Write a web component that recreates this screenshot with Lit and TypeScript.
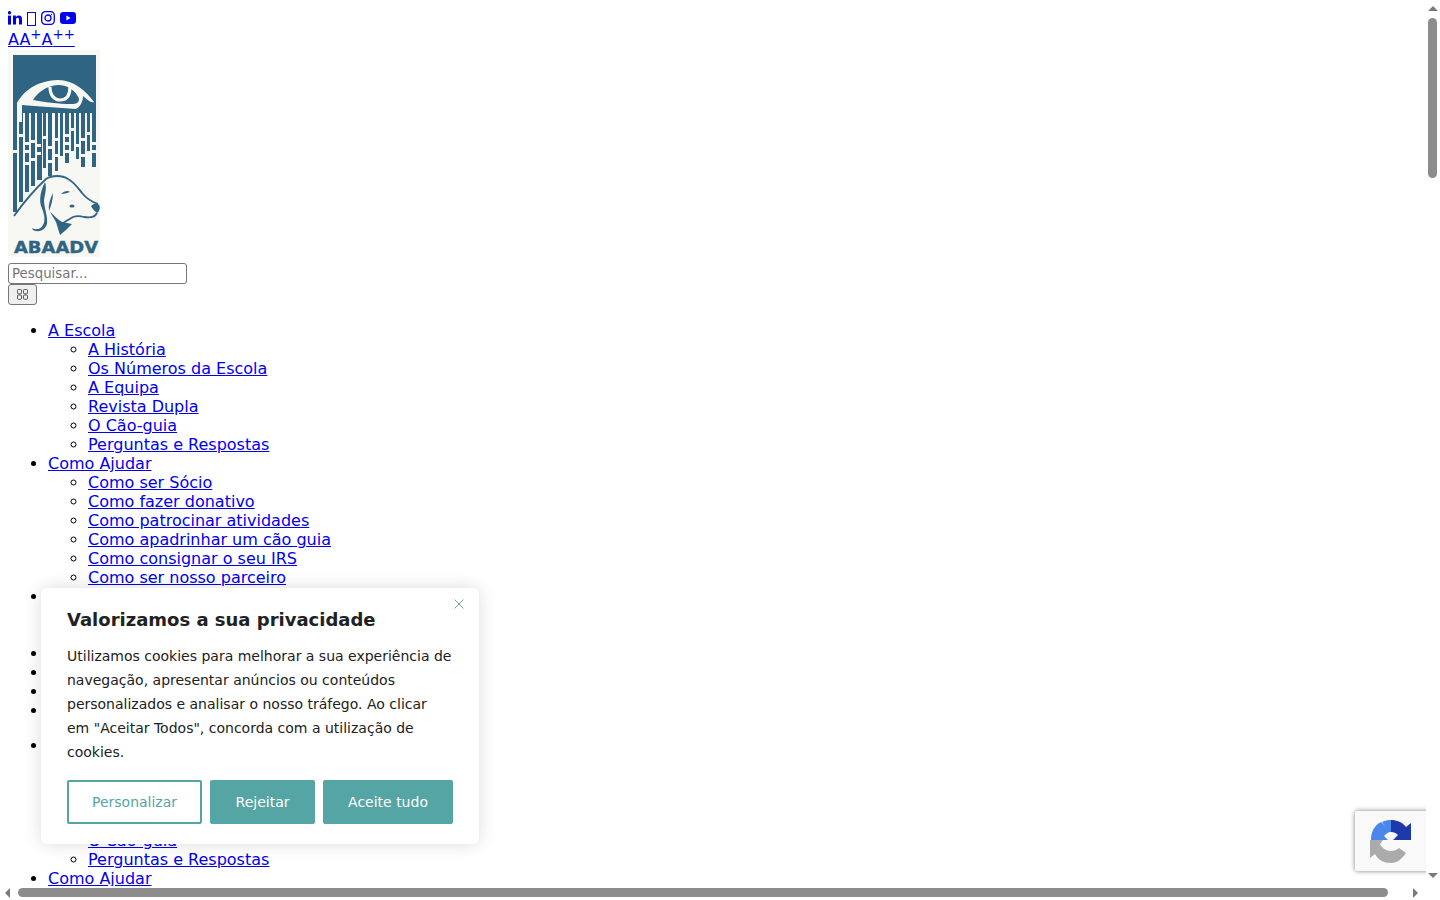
import { LitElement, html, css, svg } from "lit";
import { customElement } from "lit/decorators.js";

const sub = (items: string[]) => html`<ul>${items.map((t) => html`<li><a href="#">${t}</a></li>`)}</ul>`;

const escola = ["A História", "Os Números da Escola", "A Equipa", "Revista Dupla", "O Cão-guia", "Perguntas e Respostas"];
const ajudar = ["Como ser Sócio", "Como fazer donativo", "Como patrocinar atividades", "Como apadrinhar um cão guia", "Como consignar o seu IRS", "Como ser nosso parceiro"];

const BLUE = "#2f6583";
const PAPER = "#f7f7f4";

// x, width, bottom of each blue "rain" column of the logo
const rain: [number, number, number][] = [
  [5, 4, 162], [11, 4, 152], [17, 4, 142], [23, 4, 136], [29, 5, 130],
  [35, 3, 118], [40, 4, 126], [47, 3, 121], [52, 3, 106], [57, 4, 113],
  [63, 3, 101], [68, 3, 109], [73, 4, 117], [79, 3, 101], [84, 4, 117],
];
const dashes: [number, number][] = [
  [11, 84], [17, 92], [17, 100], [23, 90], [23, 108], [29, 94], [29, 102],
  [35, 86], [40, 96], [40, 110], [47, 88], [47, 104], [57, 84], [57, 92], [57, 100],
  [63, 78], [68, 94], [73, 88], [73, 104], [79, 82], [84, 92], [84, 100], [5, 100], [17, 112],
];

const logo = svg`
  <rect width="92" height="207" fill="${PAPER}"/>
  <rect x="5" y="5" width="83" height="58" fill="${BLUE}"/>
  ${rain.map(([x, w, b]) => svg`<rect x="${x}" y="58" width="${w}" height="${b - 58}" fill="${BLUE}"/>`)}
  ${dashes.map(([x, y]) => svg`<rect x="${x}" y="${y}" width="4" height="3" fill="${PAPER}"/>`)}
  <path d="M9 53 C15 42 27 31 50 30 C66 30 78 41 86 52 C83 53 80 50 75 46 C75 52 72 57 68 59 C50 58 30 56 14 55 L14 72 L9 72 Z" fill="${PAPER}"/>
  <path d="M25 50 C30 42 38 36 50 35 C60 35 68 41 71 49 C71 53 68 54 64 54 C50 54 36 52 25 50 Z" fill="${BLUE}"/>
  <path d="M42 37 C42 46 47 50 52 50 C58 50 62 46 62 37" fill="none" stroke="${PAPER}" stroke-width="3.200"/>
  <path d="M6 166 C16 152 26 140 38 129 C44 125 54 125 60 129 C66 132 70 138 74 143 C78 148 84 152 90 154"
    fill="none" stroke="${BLUE}" stroke-width="1.800"/>
  <path d="M90 154 C93 156 92 161 89 163 C86 161 84 158 83 156 C85 154 88 153 90 154 Z" fill="${BLUE}"/>
  <path d="M89 163 C87 167 82 168 76 167 C72 166 68 166 65 167 C60 170 56 172 54 174" fill="none" stroke="${BLUE}" stroke-width="1.800"/>
  <path d="M37 132 C33 140 31 148 33 156 C36 163 38 170 35 175 C32 180 28 180 24 178 L25 180 C31 183 37 180 39 174 C40 166 36 158 36 150 C37 144 39 138 37 132 Z" fill="${BLUE}"/>
  <path d="M45 143 C42 149 40 155 41 161 C43 156 45 150 45 143 Z" fill="${BLUE}"/>
  <path d="M42 162 L48 172 L52 185 C56 182 60 178 64 174 L54 172 C50 170 46 165 42 162 Z" fill="${BLUE}"/>
  <path d="M53 144 C56 141 60 140 62 142 C59 143 56 144 53 144 Z" fill="${BLUE}"/>
  <ellipse cx="64" cy="156" rx="2.500" ry="1.600" fill="${BLUE}"/>
  <text x="6" y="203" class="logo-text" textLength="84" lengthAdjust="spacingAndGlyphs">ABAADV</text>
`;

const recaptcha = svg`
  <path d="M22 1 V13 C19 13 17 15 15 17 L19 21 H2 C2 12 6 6 12 3 L16 7 L13 3 C16 1.500 19 1 22 1 Z" fill="#4a86ec"/>
  <path d="M22 1 C28 1 33 3 37 8 L42 4 V21 H24 L29 16 C27 14 25 13 22 13 Z" fill="#1c3aa9"/>
  <path d="M1 21 H14 L11 25 C13 29 17 32 22 32 C25 32 28 31 30 29 L37 34 C33 40 28 44 22 44 C15 44 9 41 6 35 L1 39 Z" fill="#ababab"/>
`;

@customElement("app-root")
export class AppRoot extends LitElement {
  static styles = css`
    :host {
      display: block;
      position: relative;
      width: 1440px;
      height: 900px;
      overflow: hidden;
      background: #fff;
      font-family: "DejaVu Sans", sans-serif;
      font-size: 16px;
      color: #000;
    }
    .page { box-sizing: border-box; width: 1426px; height: 886px; padding: 8px; overflow: hidden; }
    a { color: #0000ee; }
    .social { display: flex; align-items: center; height: 19px; gap: 5px; }
    .social a { display: flex; }
    .sz { display: block; line-height: 19px; }
    sup { line-height: normal; }
    .logo { display: block; width: 92px; height: 207px; margin-top: 1px; margin-bottom: 6px; }
    .logo-text { font: 700 16px "DejaVu Sans", sans-serif; fill: #2f6583; stroke: #2f6583; stroke-width: 0.4px; }
    input {
      display: block;
      box-sizing: border-box;
      width: 179px;
      height: 21px;
      padding: 1px 3px;
      border: 1px solid #767676;
      border-radius: 3px;
      font: 13.333px "DejaVu Sans", sans-serif;
    }
    input::placeholder { color: #757575; }
    .grid {
      display: flex;
      align-items: center;
      justify-content: center;
      box-sizing: border-box;
      width: 29px;
      height: 21px;
      padding: 0;
      background: #efefef;
      border: 1px solid #767676;
      border-radius: 3px;
    }
    ul { margin: 0; padding-left: 40px; line-height: 19px; }
    .menu { margin: 16px 0; }
    .consent {
      position: absolute;
      left: 41px;
      top: 588px;
      box-sizing: border-box;
      width: 438px;
      height: 256px;
      padding: 20px 26px 0;
      background: #fff;
      border-radius: 6px;
      box-shadow: 0 0 18px rgba(0, 0, 0, 0.14);
      color: #212121;
    }
    .consent h2 { margin: 0 0 12px; font-size: 18px; font-weight: 700; line-height: 24px; }
    .consent p { margin: 0 0 16px; font-size: 14px; line-height: 24px; }
    .close { position: absolute; right: 15px; top: 11px; display: block; }
    .actions { display: flex; gap: 8px; }
    .actions button {
      box-sizing: border-box;
      height: 44px;
      border: 2px solid #56a5a5;
      border-radius: 2px;
      background: #56a5a5;
      color: #fff;
      font: 14px "DejaVu Sans", sans-serif;
      padding: 0;
    }
    .actions .custom { width: 135px; background: #fff; color: #56a5a5; }
    .actions .reject { width: 105px; }
    .actions .accept { width: 130px; }
    .badge {
      position: absolute;
      left: 1355px;
      top: 811px;
      width: 80px;
      height: 60px;
      background: #f9f9f9;
      box-shadow: 0 0 5px #808080;
      border-radius: 2px;
    }
    .badge svg { position: absolute; left: 14px; top: 8px; }
    .vbar { position: absolute; left: 1426px; top: 0; width: 14px; height: 900px; background: #fff; }
    .hbar { position: absolute; left: 0; top: 886px; width: 1440px; height: 14px; background: #fff; }
    .thumb { position: absolute; background: #8c8c8c; border-radius: 5px; }
    .vbar .thumb { left: 2px; top: 18px; width: 9px; height: 160px; }
    .hbar .thumb { left: 18px; top: 2px; width: 1370px; height: 9px; }
    .arrow { position: absolute; width: 0; height: 0; border: 5px solid transparent; }
    .up { left: 2px; top: 6px; border-top-width: 0; border-bottom-color: #7a7a7a; }
    .down { left: 2px; top: 873px; border-bottom-width: 0; border-top-color: #7a7a7a; }
    .left { left: 5px; top: 2px; border-left-width: 0; border-right-color: #7a7a7a; }
    .right { left: 1413px; top: 2px; border-right-width: 0; border-left-color: #7a7a7a; }
  `;

  private menu(second: boolean) {
    return html`<ul class="menu">
      <li><a href="#">A Escola</a>${sub(escola)}</li>
      <li><a href="#">Como Ajudar</a>${sub(ajudar)}</li>
      ${second
        ? ""
        : html`<li>&nbsp;<ul><li>&nbsp;</li><li>&nbsp;</li></ul></li>
            <li>&nbsp;</li><li>&nbsp;</li><li>&nbsp;</li><li>&nbsp;</li>`}
    </ul>`;
  }

  render() {
    return html`
      <div class="page">
        <div class="social">
          <a href="#" aria-label="LinkedIn"><svg width="14" height="14" viewBox="0 0 14 14" fill="#0000ee"><rect x="0" y="4.600" width="3" height="9"/><circle cx="1.500" cy="1.800" r="1.700"/><path d="M5 4.600h2.900v1.300c.5-.9 1.600-1.500 2.900-1.500 2.500 0 3.200 1.600 3.200 4v5.200h-3V9c0-1.100-.1-2.200-1.400-2.200S8 7.800 8 9v4.600H5Z"/></svg></a>
          <a href="#" aria-label="Twitter"><svg width="9" height="19" viewBox="0 0 9 19" fill="none" stroke="#0000ee"><rect x=".5" y="4.500" width="8" height="13"/></svg></a>
          <a href="#" aria-label="Instagram"><svg width="14" height="14" viewBox="0 0 14 14" fill="none" stroke="#0000ee" stroke-width="1.300"><rect x=".7" y=".7" width="12.600" height="12.600" rx="3.600"/><circle cx="7" cy="7" r="3"/><circle cx="10.600" cy="3.400" r=".6" fill="#0000ee" stroke="none"/></svg></a>
          <a href="#" aria-label="YouTube"><svg width="16" height="12" viewBox="0 0 16 12"><rect width="16" height="12" rx="3.200" fill="#0000ee"/><path d="M6.400 3.500 10.600 6 6.400 8.500Z" fill="#fff"/></svg></a>
        </div>
        <a class="sz" href="#">A<span>A<sup>+</sup></span><span>A<sup>++</sup></span></a>
        <svg class="logo" viewBox="0 0 92 207" role="img" aria-label="ABAADV">${logo}</svg>
        <input placeholder="Pesquisar..." />
        <button class="grid" aria-label="Pesquisar">
          <svg width="11" height="11" viewBox="0 0 11 11" fill="none" stroke="#333" stroke-width=".8"><rect x=".5" y=".5" width="4" height="4.300" rx="1"/><rect x="6.500" y=".5" width="4" height="4.300" rx="1"/><rect x=".5" y="6" width="4" height="4.300" rx="1"/><rect x="6.500" y="6" width="4" height="4.300" rx="1"/></svg>
        </button>
        ${this.menu(false)}
        ${this.menu(true)}
      </div>

      <div class="badge"><svg width="44" height="44" viewBox="0 0 44 44">${recaptcha}</svg></div>

      <div class="consent">
        <svg class="close" width="10" height="10" viewBox="0 0 10 10" stroke="#7f9aaa" stroke-width="1"><path d="M.5.5l9 9M9.500.5l-9 9"/></svg>
        <h2>Valorizamos a sua privacidade</h2>
        <p>Utilizamos cookies para melhorar a sua experiência de navegação, apresentar anúncios ou conteúdos personalizados e analisar o nosso tráfego. Ao clicar em "Aceitar Todos", concorda com a utilização de cookies.</p>
        <div class="actions">
          <button class="custom">Personalizar</button>
          <button class="reject">Rejeitar</button>
          <button class="accept">Aceite tudo</button>
        </div>
      </div>

      <div class="hbar"><span class="arrow left"></span><span class="thumb"></span><span class="arrow right"></span></div>
      <div class="vbar"><span class="arrow up"></span><span class="thumb"></span><span class="arrow down"></span></div>
    `;
  }
}
